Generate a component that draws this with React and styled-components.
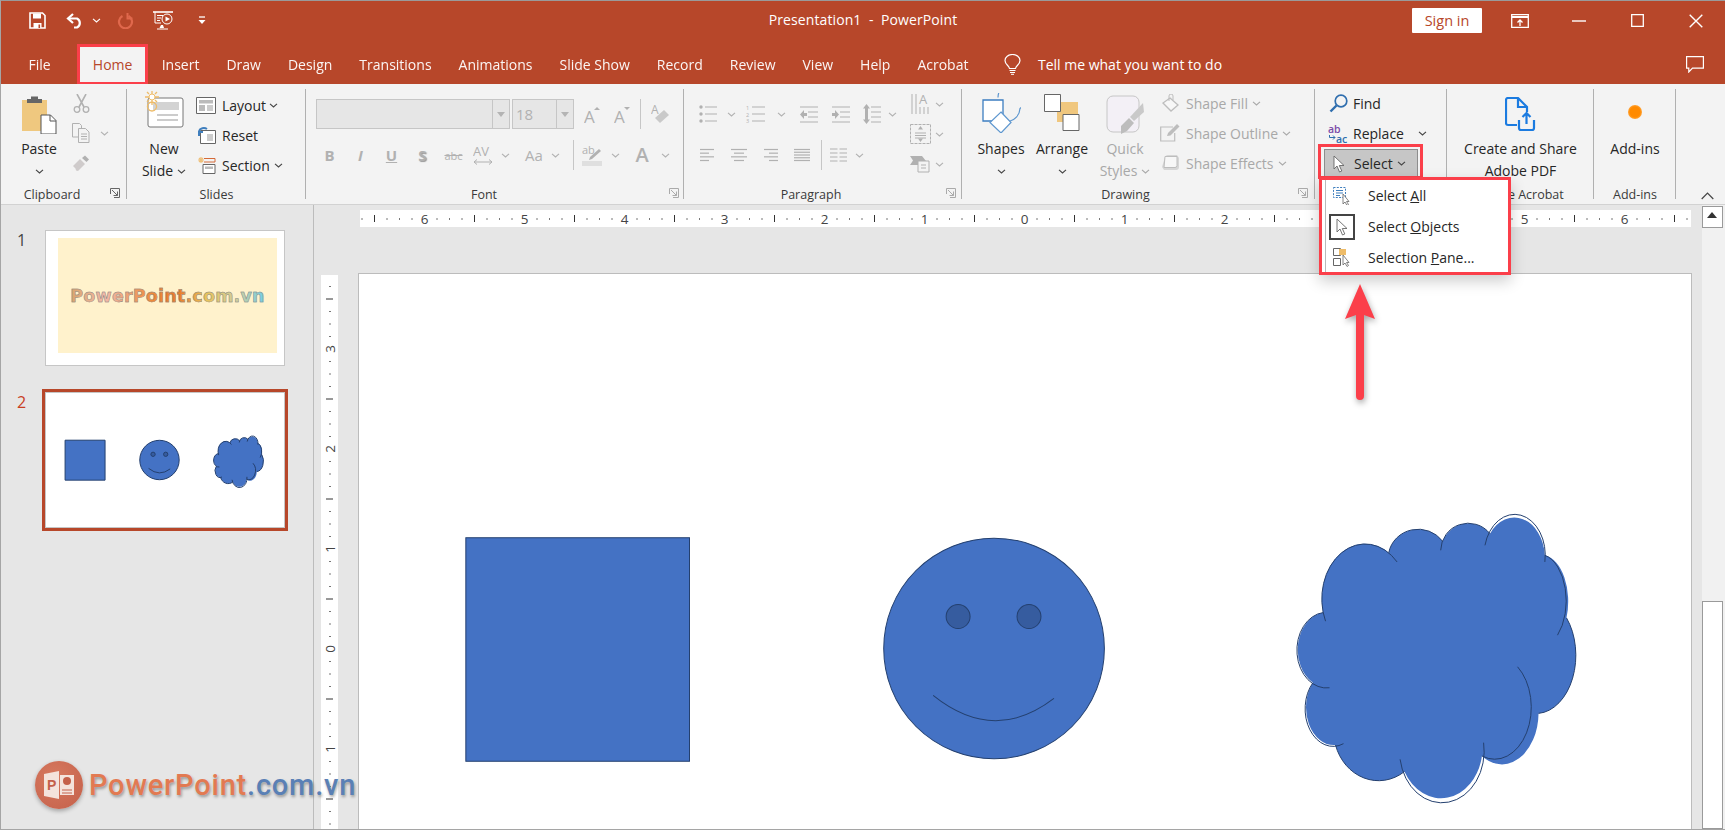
import React from 'react';
import styled, { createGlobalStyle } from 'styled-components';

const UI_FONT = '"Open Sans", "Noto Sans", "Liberation Sans", sans-serif';
const RED = '#fb3f4a';
const BRAND = '#b7472a';
const OFF = '#b1b1b1';
const DARK = '#444';

const GlobalStyle = createGlobalStyle`
  html, body { margin: 0; padding: 0; background: #e6e6e6; }
  body { font-family: ${UI_FONT}; overflow: hidden; }
  * { box-sizing: border-box; }
`;

const Svg = ({ w, h, children }) => (
  <svg width={w} height={h} viewBox={`0 0 ${w} ${h}`} fill="none" style={{ display: 'block' }}>
    {children}
  </svg>
);

const Chev = ({ c = '#444' }) => (
  <Svg w={9} h={5}>
    <path d="M1 .8 4.5 4 8 .8" stroke={c} strokeWidth="1.1" />
  </Svg>
);

const Launcher = ({ c = '#666' }) => (
  <Svg w={10} h={10}>
    <path d="M.5 6V.5H9.5V9.5H4" stroke={c} />
    <path d="M2 2 7.5 7.5M7.5 3.5v4h-4" stroke={c} />
  </Svg>
);

/* title bar icons */
const SaveIcon = () => (
  <Svg w={17} h={17}>
    <path d="M1 1h12.5L16 3.5V16H1z" stroke="#fff" strokeWidth="1.6" />
    <path d="M4 1.5h8v5H4z" fill="#fff" />
    <path d="M4.5 11h8v5h-8z" fill="#fff" />
    <path d="M9.5 12.5h1.6V16H9.5z" fill={BRAND} />
  </Svg>
);
const UndoIcon = () => (
  <Svg w={18} h={16}>
    <path d="M7 1 2 5.5 7 10" stroke="#fff" strokeWidth="2.2" />
    <path d="M3 5.5h8a5 5 0 0 1 0 9H8" stroke="#fff" strokeWidth="2.2" />
  </Svg>
);
const RedoIcon = () => (
  <Svg w={17} h={17}>
    <path d="M5.5 4a6.5 6.5 0 1 0 6 0" stroke="#e0684c" strokeWidth="2.2" />
    <path d="M10.5 1v5.5h5" stroke="#e0684c" strokeWidth="2" />
  </Svg>
);
const PresentIcon = () => (
  <Svg w={21} h={19}>
    <path d="M0 1h20" stroke="#fff" strokeWidth="1.6" />
    <path d="M2 1v11h6" stroke="#fff" />
    <path d="M4 4.5h6M4 7h4M4 9.5h3" stroke="#fff" />
    <circle cx="14" cy="8" r="5" stroke="#fff" />
    <path d="M12.5 5.5 17 8l-4.500 2.500z" fill="#fff" />
    <path d="M8 14h2l1 3H6.500z" fill="#fff" />
    <path d="M4 18h11" stroke="#fff" />
  </Svg>
);
const CustomizeIcon = () => (
  <Svg w={10} h={9}>
    <path d="M2 1h6" stroke="#fff" strokeWidth="1.3" />
    <path d="M1.500 4h7L5 8z" fill="#fff" />
  </Svg>
);
const RibbonModeIcon = () => (
  <Svg w={18} h={14}>
    <path d="M.7.7h16.600v12.600H.7z" stroke="#fff" strokeWidth="1.3" />
    <path d="M1 3h16" stroke="#fff" strokeWidth="2" />
    <path d="M9 12V6M6.500 8.500 9 6l2.500 2.500" stroke="#fff" strokeWidth="1.3" />
  </Svg>
);
const MinIcon = () => (
  <Svg w={14} h={2}>
    <path d="M0 1h14" stroke="#fff" strokeWidth="1.4" />
  </Svg>
);
const MaxIcon = () => (
  <Svg w={13} h={13}>
    <path d="M.7.7h11.600v11.600H.7z" stroke="#fff" strokeWidth="1.3" />
  </Svg>
);
const CloseIcon = () => (
  <Svg w={14} h={14}>
    <path d="m.7.700 12.600 12.600M13.300.7.7 13.300" stroke="#fff" strokeWidth="1.4" />
  </Svg>
);
const BulbIcon = () => (
  <Svg w={17} h={21}>
    <path d="M5.500 14.500C5 11.500 1 10.500 1 6.500a7.500 6 0 0 1 15 0c0 4-4 5-4.500 8z" stroke="#fff" strokeWidth="1.2" />
    <path d="M5.500 16.500h6M6 18.500h5M7 20.300h3" stroke="#fff" />
  </Svg>
);
const CommentIcon = () => (
  <Svg w={18} h={17}>
    <path d="M.6.6h16.800v11.500H6.500L2.800 16v-3.900H.6z" stroke="#fff" strokeWidth="1.2" />
  </Svg>
);

/* clipboard + slides */
const PasteIcon = () => (
  <Svg w={36} h={40}>
    <path d="M1 6h25v31H1z" fill="#efc87f" />
    <path d="M6 5h15v4H6zM10 2.500h7V6h-7z" fill="#666" />
    <path d="M20 21h9.500l5.500 5.500V40H20z" fill="#fff" stroke="#555" />
    <path d="M29 21v6h6" stroke="#555" />
  </Svg>
);
const ScissorsIcon = () => (
  <Svg w={17} h={19}>
    <path d="M4 0l7 13M13 0 6 13" stroke={OFF} strokeWidth="1.6" />
    <circle cx="4" cy="15.500" r="2.800" stroke={OFF} strokeWidth="1.3" />
    <circle cx="13" cy="15.500" r="2.800" stroke={OFF} strokeWidth="1.3" />
  </Svg>
);
const CopyIcon = () => (
  <Svg w={18} h={20}>
    <path d="M.5.500h7l2 2V14H.5z" stroke={OFF} fill="#f3f3f3" />
    <path d="M6.500 5.500h7l3.500 3.500v10.500H6.500z" stroke={OFF} fill="#f3f3f3" />
    <path d="M9 11h6M9 13.500h6M9 16h6" stroke={OFF} />
  </Svg>
);
const BrushIcon = () => (
  <Svg w={18} h={17}>
    <path d="M1 11 8 4l5 5-7 7-2-.500-.500-2z" fill="#cfcbcb" />
    <path d="m10 3 3-2.500 4 4L14.500 7z" fill={OFF} />
  </Svg>
);
const NewSlideIcon = () => (
  <Svg w={40} h={37}>
    <rect x="4" y="7" width="35" height="29" rx="2" fill="#fff" stroke="#777" />
    <path d="M9 11h26v8H9z" fill="#d3d3d3" />
    <path d="M13 24h21M13 29h21" stroke="#999" />
    <path d="M8 12a4.500 4.500 0 1 0 .01 0zM8 0v4M8 10v5M1 7h4M11 7h4M3 2l2 2M11 10l2 2M13 2l-2 2M5 10l-2 2" stroke="#eebc69" strokeWidth="1.300" transform="translate(0 -1)" />
    <circle cx="8" cy="6" r="3" fill="#fff" stroke="#eebc69" />
  </Svg>
);
const LayoutIcon = () => (
  <Svg w={20} h={17}>
    <path d="M.5.500h19v16H.5z" fill="#fff" stroke="#666" />
    <path d="M3 3h14v3.500H3zM3 8h6v6H3z" fill="#bbb" />
    <path d="M11 9h6M11 11h6M11 13h6" stroke="#999" />
  </Svg>
);
const ResetIcon = () => (
  <Svg w={20} h={18}>
    <path d="M4.500 4.500h15v13h-15z" fill="#fff" stroke="#666" />
    <path d="M11 8h6v7h-6z" fill="#ccc" />
    <path d="M5 12V8h4M5 7a5 4 0 0 1 8-2" stroke="#3f7ebd" strokeWidth="2" transform="translate(-2 -2)" />
  </Svg>
);
const SectionIcon = () => (
  <Svg w={20} h={18}>
    <path d="M5 1v6M2 4h6M3 2l4 4M7 2 3 6" stroke="#efc07a" strokeWidth="1.200" />
    <path d="M8 2.500h11V6H8" stroke="#d56a38" />
    <path d="M7 8.500h12v9H7z" fill="#fff" stroke="#666" />
    <path d="M9 10.500h8V13H9z" fill="#bbb" />
  </Svg>
);

/* font + paragraph */
const Glyph = styled.span`
  font-size: ${(p) => p.$size || 15}px;
  font-weight: ${(p) => p.$weight || 400};
  font-style: ${(p) => p.$italic ? 'italic' : 'normal'};
  text-decoration: ${(p) => p.$deco || 'none'};
  color: ${OFF};
  line-height: 1;
  font-family: ${UI_FONT};
`;
const GrowIcon = ({ down }) => (
  <Svg w={17} h={19}>
    <text x="0" y="18" fontSize="17" fontFamily="Open Sans" fill={OFF}>A</text>
    <path d={down ? 'M10 2h6l-3 3z' : 'M10 5h6l-3-3z'} fill={OFF} />
  </Svg>
);
const EraserIcon = () => (
  <Svg w={19} h={22}>
    <text x="0" y="11" fontSize="12" fontFamily="Open Sans" fill={OFF}>A</text>
    <path d="m4 15 9-8 5 5-9 8z" fill="#c9c9c9" />
  </Svg>
);
const SpacingIcon = () => (
  <Svg w={24} h={20}>
    <text x="0" y="11" fontSize="13" fontFamily="Open Sans" fill={OFF}>AV</text>
    <path d="M1 17h18M4 14.500 1 17l3 2.500M16 14.500 19 17l-3 2.500" stroke={OFF} />
  </Svg>
);
const HighlightIcon = () => (
  <Svg w={20} h={22}>
    <text x="0" y="10" fontSize="11" fontFamily="Open Sans" fill={OFF}>ab</text>
    <path d="m8 13 9-8 2 2-9 8-3 1z" fill={OFF} />
    <path d="M0 17h20v5H0z" fill="#dfdfdf" />
  </Svg>
);
const Lines = ({ w = 16, rows }) => (
  <Svg w={w} h={14}>
    {rows.map((r, i) => (
      <path key={i} d={`M${r[0]} ${1.5 + i * (11 / (rows.length - 1))}H${r[1]}`} stroke={OFF} strokeWidth="1.200" />
    ))}
  </Svg>
);
const BulletIcon = () => (
  <Svg w={18} h={18}>
    <circle cx="2" cy="2" r="1.700" fill={OFF} />
    <circle cx="2" cy="9" r="1.700" fill={OFF} />
    <circle cx="2" cy="16" r="1.700" fill={OFF} />
    <path d="M6 2h12M6 9h12M6 16h12" stroke={OFF} />
  </Svg>
);
const NumberIcon = () => (
  <Svg w={19} h={18}>
    <text x="0" y="5" fontSize="5.500" fill={OFF} fontFamily="Open Sans">1</text>
    <text x="0" y="11.500" fontSize="5.500" fill={OFF} fontFamily="Open Sans">2</text>
    <text x="0" y="18" fontSize="5.500" fill={OFF} fontFamily="Open Sans">3</text>
    <path d="M6 2h13M6 9h13M6 16h13" stroke={OFF} />
  </Svg>
);
const IndentIcon = ({ flip }) => (
  <Svg w={18} h={17}>
    <path d="M0 1h18M8 6h10M8 11h10M0 16h18" stroke={OFF} />
    <path d={flip ? 'M0 7h3V4l4 4.500-4 4.500v-3H0z' : 'M7 7H4V4L0 8.500 4 13v-3h3z'} fill={OFF} />
  </Svg>
);
const LineSpaceIcon = () => (
  <Svg w={18} h={20}>
    <path d="M8 3h10M8 8h10M8 13h10M8 18h10" stroke={OFF} />
    <path d="M3.500 0 7 4.500H5v11h2L3.500 20 0 15.500h2v-11H0z" fill={OFF} />
  </Svg>
);
const ColumnsIcon = () => (
  <Svg w={17} h={15}>
    <path d="M0 1h7.500M9.500 1H17M0 5h7.500M9.500 5H17M0 9h7.500M9.500 9H17M0 13h7.500M9.500 13H17" stroke={OFF} />
  </Svg>
);
const TextDirIcon = () => (
  <Svg w={19} h={22}>
    <text x="8" y="11" fontSize="13" fill={OFF} fontFamily="Open Sans">A</text>
    <path d="M1 1v20M5 1v20M9 14v7M13 14v7M17 14v7" stroke={OFF} />
  </Svg>
);
const AlignTextIcon = () => (
  <Svg w={21} h={20}>
    <path d="M.5.500h20v19H.5z" stroke={OFF} strokeDasharray="3 1" />
    <path d="M5 9h11M5 11.500h11M5 14h11" stroke={OFF} />
    <path d="M10.500 2 8 5.500h5zM10.500 18 8 14.500h5z" fill={OFF} />
  </Svg>
);
const SmartArtIcon = () => (
  <Svg w={20} h={18}>
    <path d="M0 1h12l4 5-4 4H0l3-4.500z" fill={OFF} />
    <path d="M8 6h11v11H8z" fill="#f3f3f3" stroke={OFF} />
    <path d="M11 10h5M11 13h5" stroke={OFF} />
  </Svg>
);

/* drawing */
const ShapesIcon = () => (
  <Svg w={39} h={40}>
    <path d="M16 4.500a13.500 14 0 1 1 22 11 13.500 14 0 0 1-11 13" stroke="#5e97cf" strokeWidth="1.200" />
    <path d="M1 7h20v21H1z" fill="#fff" stroke="#3d7ec1" strokeWidth="1.300" />
    <path d="m19 19 10 10.500-10 10.500L8 29.500z" fill="#fff" stroke="#5e97cf" strokeWidth="1.200" />
  </Svg>
);
const ArrangeIcon = () => (
  <Svg w={36} h={37}>
    <path d="M16 7h21v20H16z" fill="#f0c77e" transform="translate(-3 1)" />
    <path d="M.5.500h16v17H.5z" fill="#fff" stroke="#666" />
    <path d="M19 20.500h16v16H19z" fill="#fff" stroke="#666" />
  </Svg>
);
const QuickStyleIcon = () => (
  <Svg w={38} h={40}>
    <rect x="1" y="1" width="32" height="36" rx="6" fill="#f3f0f6" stroke="#c6c6c6" />
    <path d="m15 31 8-8 5 5-7 8-6 3z" fill="#bdbdbd" />
    <path d="m24 22 13-14 1 9-10 9z" fill="#c9c9c9" />
  </Svg>
);
const FillIcon = () => (
  <Svg w={18} h={18}>
    <path d="m9 4 8 7-7 6-8-8z" stroke="#bdbdbd" strokeWidth="1.300" fill="#f7f7f7" />
    <path d="M8 7V2a2 2 0 0 1 4 0v4" stroke="#bdbdbd" />
  </Svg>
);
const OutlineIcon = () => (
  <Svg w={20} h={18}>
    <path d="M13 3H.7v14h14V9" stroke="#bdbdbd" strokeWidth="1.200" />
    <path d="m7 12 1-3 9-9 2.500 2.500-9 9z" fill="#bdbdbd" />
  </Svg>
);
const EffectsIcon = () => (
  <Svg w={19} h={18}>
    <path d="M4 3a3 3 0 0 1 3-2h9l2 3v9a3 3 0 0 1-3 3H3L1 13z" fill="#d6d6d6" />
    <path d="M4 2.500h12v9a2 2 0 0 1-2 2H3z" fill="#f7f7f7" stroke="#bdbdbd" />
  </Svg>
);

/* editing */
const FindIcon = () => (
  <Svg w={19} h={19}>
    <circle cx="12" cy="7" r="5.800" stroke="#2f6eae" strokeWidth="1.700" />
    <path d="m7.500 11.500-6 6" stroke="#2f6eae" strokeWidth="2.400" />
  </Svg>
);
const ReplaceIcon = () => (
  <Svg w={20} h={19}>
    <text x="0" y="9" fontSize="10.500" fontFamily="Open Sans" fill="#7a4ba8" fontWeight="600">ab</text>
    <text x="8" y="18.500" fontSize="10.500" fontFamily="Open Sans" fill="#2f6eae" fontWeight="600">ac</text>
    <path d="M1.500 11v2.500H7M5 11.500l2 2-2 2" stroke="#2f6eae" />
  </Svg>
);
const Cursor = ({ s = 1 }) => (
  <svg width={12 * s} height={18 * s} viewBox="0 0 12 18" fill="none" style={{ display: 'block' }}>
    <path d="M1 1v13l3-3 2.500 6 2.300-1-2.500-5.500H11z" fill="#fff" stroke="#666" strokeWidth=".9" />
  </svg>
);
const SelectAllIcon = () => (
  <Svg w={18} h={18}>
    <path d="M.5.500h12v10H.5z" stroke="#3f7ebd" strokeDasharray="2 1.300" />
    <path d="M3 3.500h7M3 6h7M3 8.500h4" stroke="#3f7ebd" />
    <path d="M10 7v10l2-2 2 3.500 1.500-1-2-3H16z" fill="#fff" stroke="#666" strokeWidth=".8" />
  </Svg>
);
const PaneIcon = () => (
  <Svg w={18} h={19}>
    <path d="M.5.500h7v7h-7zM.5 10.500h7v7h-7z" stroke="#666" fill="#fff" />
    <path d="M6 1h7v6H6z" fill="#eebc69" />
    <path d="M10 7v10l2-2 2 3.500 1.500-1-2-3H16z" fill="#fff" stroke="#666" strokeWidth=".8" />
  </Svg>
);
const PdfIcon = () => (
  <Svg w={31} h={35}>
    <path d="M12 28H3a2 2 0 0 1-2-2V3a2 2 0 0 1 2-2h10l9 9v5" stroke="#1b7be0" strokeWidth="2.200" />
    <path d="M13 1v9h9" stroke="#1b7be0" strokeWidth="2.200" />
    <path d="M14 23v8a2 2 0 0 0 2 2h11a2 2 0 0 0 2-2v-8" stroke="#1b7be0" strokeWidth="2.200" />
    <path d="M21.500 27V16M17.500 20l4-4 4 4" stroke="#1b7be0" strokeWidth="2.200" />
  </Svg>
);

const Window = styled.div`
  position: relative;
  width: 1725px;
  height: 830px;
  overflow: hidden;
  display: flex;
  flex-direction: column;
  background: #e6e6e6;
  border-top: 1px solid #9a9a9a;
  border-left: 1px solid #a5a5a5;
  border-bottom: 1px solid #a5a5a5;
  color: #262626;
`;

const TitleRow = styled.div`
  height: 43px;
  background: ${BRAND};
  display: grid;
  grid-template-columns: 1fr auto 1fr;
  align-items: center;
  color: #fff;
  font-size: 14px;
`;
const Qat = styled.div`
  display: flex;
  align-items: center;
  padding-left: 28px;
  margin-top: -4px;
`;
const WinButtons = styled.div`
  display: flex;
  align-items: center;
  justify-content: flex-end;
  padding-right: 22px;
  margin-top: -4px;
`;
const Nudge = styled.span`
  display: block;
  margin-left: ${(p) => p.$ml || 0}px;
`;
const DocTitle = styled.div`
  white-space: pre;
  margin-top: -6px;
  letter-spacing: .1px;
`;
const SignIn = styled.div`
  width: 70px;
  height: 25px;
  background: #fff;
  color: ${BRAND};
  font-size: 14.5px;
  line-height: 25px;
  text-align: center;
  border-radius: 1px;
`;

const TabRow = styled.nav`
  height: 40px;
  background: ${BRAND};
  display: flex;
  align-items: center;
  padding-left: 14px;
  position: relative;
`;
const Tab = styled.div`
  padding: 0 13.5px;
  font-size: 14px;
  color: #fff;
  white-space: nowrap;
  opacity: .95;
`;
const HomeTab = styled.div`
  width: 71px;
  height: 41px;
  margin: 0 0 -1px 13px;
  align-self: flex-end;
  background: #f3f3f3;
  border: 3px solid ${RED};
  color: ${BRAND};
  font-size: 14px;
  text-align: center;
  line-height: 35px;
`;
const TellMe = styled.div`
  margin-left: 22px;
  display: flex;
  align-items: center;
  gap: 17px;
  color: #fff;
  font-size: 14px;
`;
const CommentSlot = styled.div`
  margin-left: auto;
  margin-right: 21px;
`;

const Ribbon = styled.div`
  height: 121px;
  flex: none;
  background: #f3f3f3;
  border-bottom: 1px solid #d2d2d2;
  display: flex;
  position: relative;
  z-index: 3;
`;
const Group = styled.section`
  position: relative;
  width: ${(p) => p.$w}px;
  flex: none;
  display: flex;
  flex-direction: column;
  &::after {
    content: '';
    position: absolute;
    top: 5px;
    bottom: 5px;
    right: 0;
    width: 1px;
    background: #b0b0b0;
  }
`;
const GroupBody = styled.div`
  height: 102px;
  display: flex;
  align-items: flex-start;
  padding-left: ${(p) => p.$pl || 0}px;
`;
const GroupLabel = styled.div`
  height: 18px;
  line-height: 18px;
  font-size: 12.5px;
  text-align: center;
  padding-right: ${(p) => p.$pr || 0}px;
  color: #3a3a3a;
  white-space: nowrap;
`;
const CornerLauncher = styled.span`
  position: absolute;
  right: ${(p) => p.$r}px;
  bottom: 6px;
`;
const LargeButton = styled.div`
  width: ${(p) => p.$w}px;
  margin-left: ${(p) => p.$ml || 0}px;
  display: flex;
  flex-direction: column;
  align-items: center;
  flex: none;
  color: ${(p) => (p.$off ? '#a8a8a8' : '#262626')};
`;
const LargeIconArea = styled.div`
  height: 54px;
  padding-top: ${(p) => p.$pt ?? 8}px;
  display: flex;
  justify-content: center;
  align-items: flex-start;
`;
const LargeLine = styled.div`
  height: 22px;
  line-height: 22px;
  font-size: 14px;
  white-space: nowrap;
  display: flex;
  align-items: center;
  gap: 4px;
`;
const SmallStack = styled.div`
  display: flex;
  flex-direction: column;
  padding-top: ${(p) => p.$pt ?? 4}px;
  margin-left: ${(p) => p.$ml || 0}px;
  flex: none;
`;
const SmallRow = styled.div`
  height: 30px;
  display: flex;
  align-items: center;
  font-size: 14px;
  white-space: nowrap;
  color: ${(p) => (p.$off ? '#a8a8a8' : '#262626')};
`;
const IconCell = styled.span`
  width: ${(p) => p.$w}px;
  margin-right: ${(p) => p.$mr || 0}px;
  margin-left: ${(p) => p.$ml || 0}px;
  flex: none;
  display: flex;
  justify-content: center;
`;
const SelectRow = styled(SmallRow)`
  position: relative;
  width: 94px;
  height: 29px;
  margin: 1px 0 0 -4px;
  padding-left: 4px;
  background: #c6c6c6;
  border: 1px solid #8d8d8d;
  &::after {
    content: '';
    position: absolute;
    left: -7px;
    right: -6px;
    top: -6px;
    bottom: -2px;
    border: 3px solid ${RED};
    pointer-events: none;
  }
`;
const ToolColumn = styled.div`
  padding-top: 15px;
  display: flex;
  flex-direction: column;
  gap: 11px;
  width: ${(p) => p.$w}px;
  flex: none;
  margin-left: ${(p) => p.$ml || 0}px;
`;
const ToolRow = styled.div`
  height: 30px;
  display: flex;
  align-items: center;
`;
const Slot = styled.span`
  width: ${(p) => p.$w}px;
  margin-left: ${(p) => p.$ml || 0}px;
  flex: none;
  display: flex;
  justify-content: center;
  align-items: center;
`;
const Sep = styled.span`
  width: 1px;
  height: 30px;
  flex: none;
  background: #c6c6c6;
  margin-left: ${(p) => p.$ml || 0}px;
`;
const Combo = styled.div`
  width: ${(p) => p.$w}px;
  height: 30px;
  flex: none;
  margin-right: 2px;
  background: #e6e6e6;
  border: 1px solid #c6c6c6;
  display: flex;
  color: ${OFF};
  font-size: 15px;
  line-height: 28px;
`;
const ComboValue = styled.span`
  flex: 1;
  padding-left: 3px;
`;
const ComboArrow = styled.span`
  width: 17px;
  border-left: 1px solid #c6c6c6;
  position: relative;
  &::after {
    content: '';
    position: absolute;
    left: 4px;
    top: 12px;
    border: 4px solid transparent;
    border-top: 5px solid #b4b4b4;
  }
`;
const OrangeDot = styled.span`
  display: block;
  width: 14px;
  height: 14px;
  border-radius: 50%;
  margin-top: 13px;
  background: radial-gradient(circle, #ff8a00 50%, #ffc27a 100%);
  filter: blur(.4px);
`;
const Collapse = styled.span`
  position: absolute;
  right: 11px;
  bottom: 4px;
`;

const DropMenu = styled.div`
  position: absolute;
  left: 4px;
  top: 93px;
  width: 192px;
  height: 98px;
  z-index: 5;
  background: #fff;
  border: 3px solid ${RED};
  box-shadow: 0 6px 14px rgba(0, 0, 0, .2);
  padding-left: 3px;
  &::before {
    content: '';
    position: absolute;
    left: 3px;
    top: 0;
    bottom: 0;
    width: 1px;
    background: #b9b9b9;
  }
`;
const MenuItem = styled.div`
  height: 31px;
  display: flex;
  align-items: center;
  font-size: 14px;
  color: #262626;
`;
const MenuIcon = styled.span`
  width: 26px;
  height: 26px;
  margin-left: 4px;
  flex: none;
  display: flex;
  align-items: center;
  justify-content: center;
  border: ${(p) => (p.$on ? '2px solid #444' : 'none')};
`;
const MenuText = styled.span`
  margin-left: 13px;
`;
const U = styled.span`
  text-decoration: underline;
`;

const Workspace = styled.div`
  flex: 1;
  display: flex;
  min-height: 0;
`;
const Sidebar = styled.aside`
  width: 313px;
  flex: none;
  border-right: 1px solid #bcbcbc;
  padding: 25px 0 0 16px;
  display: flex;
  flex-direction: column;
  gap: 26px;
`;
const ThumbRow = styled.div`
  display: flex;
`;
const ThumbNumber = styled.div`
  width: 28px;
  font-size: 16px;
  line-height: 16px;
  padding-top: 2px;
  color: ${(p) => (p.$on ? '#c9401f' : '#444')};
`;
const Thumb = styled.div`
  width: 240px;
  height: 136px;
  background: #fff;
  border: 1px solid #c6c6c6;
  box-shadow: ${(p) => (p.$on ? `0 0 0 3px ${BRAND}` : 'none')};
  padding: ${(p) => (p.$on ? 0 : '7px 7px 12px 12px')};
`;
const Poster = styled.div`
  height: 100%;
  background: #fff2cc;
  display: flex;
  align-items: center;
  justify-content: center;
`;
const PosterText = styled.div`
  font-family: "DejaVu Sans", sans-serif;
  font-weight: 700;
  font-size: 17.500px;
  letter-spacing: .2px;
  color: transparent;
  background: linear-gradient(90deg, #d9a46b, #f3b9a8 18%, #ee8a3a 42%, #ea7a2a 55%, #e9c35a 70%, #cfd0a0 86%, #6fd0e8);
  -webkit-background-clip: text;
  background-clip: text;
  -webkit-text-stroke: .5px #8a8a8a;
`;
const Stage = styled.main`
  flex: 1;
  min-width: 0;
  display: flex;
  flex-direction: column;
  padding-top: 5px;
`;
const HRulerBar = styled.div`
  height: 17px;
  margin-left: 46px;
  width: 1331px;
  flex: none;
  background: #fff;
`;
const SlideRow = styled.div`
  flex: 1;
  min-height: 0;
  display: flex;
  align-items: stretch;
  margin-top: 46px;
  padding-left: 7px;
`;
const VRulerBar = styled.div`
  width: 17px;
  flex: none;
  margin-top: 2px;
  background: #fff;
  overflow: hidden;
`;
const Slide = styled.div`
  width: 1334px;
  margin-left: 20px;
  flex: none;
  background: #fff;
  border-top: 1px solid #bcbcbc;
  border-left: 1px solid #bcbcbc;
  border-right: 1px solid #bcbcbc;
  overflow: hidden;
`;
const ScrollTrack = styled.div`
  width: 23px;
  flex: none;
  background: #f1f1f1;
  display: flex;
  flex-direction: column;
  padding-top: 1px;
`;
const ScrollUp = styled.div`
  width: 21px;
  height: 22px;
  background: #fff;
  border: 1px solid #9a9a9a;
  position: relative;
  &::after {
    content: '';
    position: absolute;
    left: 4px;
    top: 5px;
    border: 5px solid transparent;
    border-top: 0;
    border-bottom: 6px solid #333;
  }
`;
const ScrollThumb = styled.div`
  width: 21px;
  margin-top: auto;
  height: 228px;
  background: #fff;
  border: 1px solid #9a9a9a;
`;

const Watermark = styled.div`
  position: absolute;
  left: 34px;
  bottom: 20px;
  display: flex;
  align-items: center;
  gap: 6px;
  z-index: 2;
`;
const LogoCircle = styled.div`
  width: 48px;
  height: 48px;
  border-radius: 50%;
  background: radial-gradient(circle at 40% 35%, #d7795f, #c4604a);
  box-shadow: 0 2px 4px rgba(0, 0, 0, .3);
  display: flex;
  align-items: center;
  justify-content: center;
`;
const WatermarkText = styled.div`
  font-family: "Roboto", "Liberation Sans", sans-serif;
  font-weight: 500;
  font-size: 29px;
  letter-spacing: .8px;
  color: #e27a52;
  text-shadow: 1px 2px 3px rgba(0, 0, 0, .35), 0 0 1px #fff;
  white-space: nowrap;
`;
const Dot = styled.span`
  color: #5a80b5;
`;
const PointerArrow = styled.div`
  position: absolute;
  left: 1340px;
  top: 281px;
  z-index: 4;
  filter: drop-shadow(1px 3px 3px rgba(0, 0, 0, .35));
`;

const SlideArt = ({ width, height }) => {
  const line = { stroke: '#24406f', strokeWidth: 1, vectorEffect: 'non-scaling-stroke' };
  const cloudFill =
    'M131 342A130 165 0 0 1 328 162A90 86 0 0 1 490 128A83 83 0 0 1 632 105A92 123 0 0 1 797 170A81 140 0 0 1 862 358A120 175 0 0 1 778 645A110 156 0 0 1 608 773A125 153 0 0 1 375 820A135 150 0 0 1 168 740A84 113 0 0 1 100 553A88 113 0 0 1 131 342Z';
  const cloudLines =
    'M138 368A130 165 0 0 1 353 190M328 162A90 86 0 0 1 490 128M484 155A83 83 0 0 1 632 105M617 140A92 123 0 0 1 797 190M797 170A81 140 0 0 1 835 410M862 358A120 175 0 0 1 778 645M715 505A110 156 0 0 1 608 773M613 733A125 153 0 0 1 362 783M375 820A135 150 0 0 1 168 740M192 736A84 113 0 0 1 100 553M150 568A88 113 0 0 1 131 342';
  return (
    <svg width={width} height={height} viewBox="0 0 1334 750" style={{ display: 'block' }}>
      <rect x="107" y="264" width="224" height="224" fill="#4472c4" {...line} />
      <circle cx="636" cy="375" r="110.500" fill="#4472c4" {...line} />
      <circle cx="600" cy="343" r="12" fill="#365c9f" {...line} />
      <circle cx="671" cy="343" r="12" fill="#365c9f" {...line} />
      <path d="M575 422Q636 471 696 425" fill="none" {...line} />
      <g transform="translate(922 225) scale(.3333)">
        <path d={cloudFill} fill="#4472c4" />
        <path d={cloudLines} fill="none" {...line} />
      </g>
    </svg>
  );
};

function HorizontalRuler() {
  const marks = [];
  for (let i = -53; i <= 53; i++) {
    const x = 664.5 + i * 12.5;
    if (i % 8 === 0) {
      marks.push(
        <text key={i} x={x} y="13.500" textAnchor="middle" fontSize="13.500" fontFamily="Open Sans" fill="#444">
          {Math.abs(i / 8)}
        </text>
      );
    } else if (i % 4 === 0) {
      marks.push(<path key={i} d={`M${x} 5v7`} stroke="#333" />);
    } else {
      marks.push(<path key={i} d={`M${x} 8v2`} stroke="#777" />);
    }
  }
  return (
    <svg width="1331" height="17" style={{ display: 'block' }}>
      {marks}
    </svg>
  );
}

function VerticalRuler() {
  const marks = [];
  for (let i = -29; i <= 14; i++) {
    const y = 374 + i * 12.5;
    if (i % 8 === 0) {
      marks.push(
        <text key={i} x="0" y="0" textAnchor="middle" fontSize="13.500" fontFamily="Open Sans" fill="#444" transform={`translate(13.500 ${y}) rotate(-90)`}>
          {Math.abs(i / 8)}
        </text>
      );
    } else if (i % 4 === 0) {
      marks.push(<path key={i} d={`M5 ${y}h7`} stroke="#333" />);
    } else {
      marks.push(<path key={i} d={`M8 ${y}h2`} stroke="#777" />);
    }
  }
  return (
    <svg width="17" height="560" style={{ display: 'block' }}>
      {marks}
    </svg>
  );
}

const tabs = ['Insert', 'Draw', 'Design', 'Transitions', 'Animations', 'Slide Show', 'Record', 'Review', 'View', 'Help', 'Acrobat'];

export default function App() {
  return (
    <Window>
      <GlobalStyle />
      <TitleRow>
        <Qat>
          <SaveIcon />
          <Nudge $ml={20}><UndoIcon /></Nudge>
          <Nudge $ml={8}><Chev c="#fff" /></Nudge>
          <Nudge $ml={16}><RedoIcon /></Nudge>
          <Nudge $ml={19}><PresentIcon /></Nudge>
          <Nudge $ml={23}><CustomizeIcon /></Nudge>
        </Qat>
        <DocTitle>Presentation1  -  PowerPoint</DocTitle>
        <WinButtons>
          <SignIn>Sign in</SignIn>
          <Nudge $ml={29}><RibbonModeIcon /></Nudge>
          <Nudge $ml={43}><MinIcon /></Nudge>
          <Nudge $ml={45}><MaxIcon /></Nudge>
          <Nudge $ml={45}><CloseIcon /></Nudge>
        </WinButtons>
      </TitleRow>

      <TabRow>
        <Tab>File</Tab>
        <HomeTab>Home</HomeTab>
        {tabs.map((t) => (
          <Tab key={t}>{t}</Tab>
        ))}
        <TellMe>
          <BulbIcon />
          <span>Tell me what you want to do</span>
        </TellMe>
        <CommentSlot>
          <CommentIcon />
        </CommentSlot>
      </TabRow>

      <Ribbon>
        <Group $w={126}>
          <GroupBody $pl={5}>
            <LargeButton $w={66}>
              <LargeIconArea $pt={10}><PasteIcon /></LargeIconArea>
              <LargeLine>Paste</LargeLine>
              <LargeLine><Chev /></LargeLine>
            </LargeButton>
            <SmallStack>
              <SmallRow $off><IconCell $w={18}><ScissorsIcon /></IconCell></SmallRow>
              <SmallRow $off><IconCell $w={18}><CopyIcon /></IconCell><IconCell $w={9} $ml={10}><Chev c="#b1b1b1" /></IconCell></SmallRow>
              <SmallRow $off><IconCell $w={18}><BrushIcon /></IconCell></SmallRow>
            </SmallStack>
          </GroupBody>
          <GroupLabel $pr={24}>Clipboard</GroupLabel>
          <CornerLauncher $r={7}><Launcher /></CornerLauncher>
        </Group>

        <Group $w={179}>
          <GroupBody $pl={12}>
            <LargeButton $w={50}>
              <LargeIconArea $pt={7}><NewSlideIcon /></LargeIconArea>
              <LargeLine>New</LargeLine>
              <LargeLine>Slide <Chev /></LargeLine>
            </LargeButton>
            <SmallStack $ml={7} $pt={6}>
              <SmallRow><IconCell $w={20} $mr={6}><LayoutIcon /></IconCell>Layout<IconCell $w={9} $ml={3}><Chev /></IconCell></SmallRow>
              <SmallRow><IconCell $w={20} $mr={6}><ResetIcon /></IconCell>Reset</SmallRow>
              <SmallRow><IconCell $w={20} $mr={6}><SectionIcon /></IconCell>Section<IconCell $w={9} $ml={4}><Chev /></IconCell></SmallRow>
            </SmallStack>
          </GroupBody>
          <GroupLabel>Slides</GroupLabel>
        </Group>

        <Group $w={378}>
          <GroupBody $pl={8}>
            <ToolColumn $w={370} $ml={0}>
              <ToolRow>
                <Nudge $ml={2} />
                <Combo $w={194}><ComboValue /><ComboArrow /></Combo>
                <Combo $w={62}><ComboValue>18</ComboValue><ComboArrow /></Combo>
                <Slot $w={30} $ml={1}><GrowIcon /></Slot>
                <Slot $w={30}><GrowIcon down /></Slot>
                <Sep $ml={3} />
                <Slot $w={30} $ml={4}><EraserIcon /></Slot>
              </ToolRow>
              <ToolRow>
                <Slot $w={31}><Glyph $weight={700}>B</Glyph></Slot>
                <Slot $w={31}><Glyph $weight={700} $italic>I</Glyph></Slot>
                <Slot $w={31}><Glyph $weight={700} $deco="underline">U</Glyph></Slot>
                <Slot $w={31}><Glyph $weight={700} style={{ textShadow: '1px 1px 1px #999' }}>S</Glyph></Slot>
                <Slot $w={31}><Glyph $size={11} $deco="line-through">abc</Glyph></Slot>
                <Slot $w={31}><SpacingIcon /></Slot>
                <Slot $w={10}><Chev c="#b1b1b1" /></Slot>
                <Slot $w={32} $ml={8}><Glyph $size={15}>Aa</Glyph></Slot>
                <Slot $w={10}><Chev c="#b1b1b1" /></Slot>
                <Sep $ml={13} />
                <Slot $w={32} $ml={2}><HighlightIcon /></Slot>
                <Slot $w={10} $ml={2}><Chev c="#b1b1b1" /></Slot>
                <Slot $w={32} $ml={6}><Glyph $size={20} $weight={600}>A</Glyph></Slot>
                <Slot $w={10} $ml={2}><Chev c="#b1b1b1" /></Slot>
              </ToolRow>
            </ToolColumn>
          </GroupBody>
          <GroupLabel $pr={22}>Font</GroupLabel>
          <CornerLauncher $r={5}><Launcher c="#aaa" /></CornerLauncher>
        </Group>

        <Group $w={278}>
          <GroupBody $pl={8}>
            <ToolColumn $w={213}>
              <ToolRow>
                <Slot $w={32}><BulletIcon /></Slot>
                <Slot $w={10} $ml={2}><Chev c="#b1b1b1" /></Slot>
                <Slot $w={32} $ml={3}><NumberIcon /></Slot>
                <Slot $w={10} $ml={5}><Chev c="#b1b1b1" /></Slot>
                <Slot $w={32} $ml={7}><IndentIcon /></Slot>
                <Slot $w={32}><IndentIcon flip /></Slot>
                <Slot $w={30}><LineSpaceIcon /></Slot>
                <Slot $w={10}><Chev c="#b1b1b1" /></Slot>
              </ToolRow>
              <ToolRow>
                <Slot $w={32}><Lines rows={[[0, 14], [0, 9], [0, 14], [0, 9]]} /></Slot>
                <Slot $w={30}><Lines rows={[[0, 16], [3, 13], [0, 16], [3, 13]]} /></Slot>
                <Slot $w={32}><Lines rows={[[2, 16], [7, 16], [2, 16], [7, 16]]} /></Slot>
                <Slot $w={32}><Lines rows={[[0, 16], [0, 16], [0, 16], [0, 16], [0, 16]]} /></Slot>
                <Sep $ml={3} />
                <Slot $w={32}><ColumnsIcon /></Slot>
                <Slot $w={10}><Chev c="#b1b1b1" /></Slot>
              </ToolRow>
            </ToolColumn>
            <SmallStack $pt={5}>
              <SmallRow><IconCell $w={30}><TextDirIcon /></IconCell><IconCell $w={9}><Chev c="#b1b1b1" /></IconCell></SmallRow>
              <SmallRow><IconCell $w={30}><AlignTextIcon /></IconCell><IconCell $w={9}><Chev c="#b1b1b1" /></IconCell></SmallRow>
              <SmallRow><IconCell $w={30}><SmartArtIcon /></IconCell><IconCell $w={9}><Chev c="#b1b1b1" /></IconCell></SmallRow>
            </SmallStack>
          </GroupBody>
          <GroupLabel $pr={24}>Paragraph</GroupLabel>
          <CornerLauncher $r={6}><Launcher c="#aaa" /></CornerLauncher>
        </Group>

        <Group $w={353}>
          <GroupBody $pl={8}>
            <LargeButton $w={62}>
              <LargeIconArea $pt={9}><ShapesIcon /></LargeIconArea>
              <LargeLine>Shapes</LargeLine>
              <LargeLine><Chev /></LargeLine>
            </LargeButton>
            <LargeButton $w={60}>
              <LargeIconArea $pt={10}><ArrangeIcon /></LargeIconArea>
              <LargeLine>Arrange</LargeLine>
              <LargeLine><Chev /></LargeLine>
            </LargeButton>
            <LargeButton $w={54} $ml={6} $off>
              <LargeIconArea $pt={11}><QuickStyleIcon /></LargeIconArea>
              <LargeLine>Quick</LargeLine>
              <LargeLine>Styles <Chev c="#a8a8a8" /></LargeLine>
            </LargeButton>
            <SmallStack $ml={8}>
              <SmallRow $off><IconCell $w={20} $mr={6}><FillIcon /></IconCell>Shape Fill<IconCell $w={9} $ml={4}><Chev c="#a8a8a8" /></IconCell></SmallRow>
              <SmallRow $off><IconCell $w={20} $mr={6}><OutlineIcon /></IconCell>Shape Outline<IconCell $w={9} $ml={4}><Chev c="#a8a8a8" /></IconCell></SmallRow>
              <SmallRow $off><IconCell $w={20} $mr={6}><EffectsIcon /></IconCell>Shape Effects<IconCell $w={9} $ml={4}><Chev c="#a8a8a8" /></IconCell></SmallRow>
            </SmallStack>
          </GroupBody>
          <GroupLabel $pr={26}>Drawing</GroupLabel>
          <CornerLauncher $r={7}><Launcher c="#aaa" /></CornerLauncher>
        </Group>

        <Group $w={132}>
          <GroupBody $pl={13}>
            <SmallStack>
              <SmallRow><IconCell $w={20} $mr={5}><FindIcon /></IconCell>Find</SmallRow>
              <SmallRow><IconCell $w={20} $mr={5}><ReplaceIcon /></IconCell>Replace<IconCell $w={9} $ml={14}><Chev /></IconCell></SmallRow>
              <SelectRow><IconCell $w={20} $mr={5}><Cursor /></IconCell>Select<IconCell $w={9} $ml={4}><Chev /></IconCell></SelectRow>
            </SmallStack>
          </GroupBody>
          <GroupLabel>Editing</GroupLabel>
          <DropMenu>
            <MenuItem>
              <MenuIcon><SelectAllIcon /></MenuIcon>
              <MenuText>Select <U>A</U>ll</MenuText>
            </MenuItem>
            <MenuItem>
              <MenuIcon $on><Cursor /></MenuIcon>
              <MenuText>Select <U>O</U>bjects</MenuText>
            </MenuItem>
            <MenuItem>
              <MenuIcon><PaneIcon /></MenuIcon>
              <MenuText>Selection <U>P</U>ane...</MenuText>
            </MenuItem>
          </DropMenu>
        </Group>

        <Group $w={147}>
          <GroupBody>
            <LargeButton $w={147}>
              <LargeIconArea $pt={13}><PdfIcon /></LargeIconArea>
              <LargeLine>Create and Share</LargeLine>
              <LargeLine>Adobe PDF</LargeLine>
            </LargeButton>
          </GroupBody>
          <GroupLabel>Adobe Acrobat</GroupLabel>
        </Group>

        <Group $w={82}>
          <GroupBody>
            <LargeButton $w={82}>
              <LargeIconArea $pt={8}><OrangeDot /></LargeIconArea>
              <LargeLine>Add-ins</LargeLine>
            </LargeButton>
          </GroupBody>
          <GroupLabel>Add-ins</GroupLabel>
        </Group>

        <Collapse>
          <Svg w={13} h={8}>
            <path d="M.7 7 6.500 1 12.300 7" stroke={DARK} strokeWidth="1.200" />
          </Svg>
        </Collapse>
      </Ribbon>

      <Workspace>
        <Sidebar>
          <ThumbRow>
            <ThumbNumber>1</ThumbNumber>
            <Thumb>
              <Poster>
                <PosterText>PowerPoint.com.vn</PosterText>
              </Poster>
            </Thumb>
          </ThumbRow>
          <ThumbRow>
            <ThumbNumber $on>2</ThumbNumber>
            <Thumb $on>
              <SlideArt width={238} height={134} />
            </Thumb>
          </ThumbRow>
        </Sidebar>
        <Stage>
          <HRulerBar>
            <HorizontalRuler />
          </HRulerBar>
          <SlideRow>
            <VRulerBar>
              <VerticalRuler />
            </VRulerBar>
            <Slide>
              <SlideArt width={1332} height={749} />
            </Slide>
          </SlideRow>
        </Stage>
        <ScrollTrack>
          <ScrollUp />
          <ScrollThumb />
        </ScrollTrack>
      </Workspace>

      <Watermark>
        <LogoCircle>
          <svg width="32" height="30" viewBox="0 0 32 30">
            <path d="M1 4 16 1v28L1 26z" fill="#f4e3dc" />
            <path d="M17 5h14v20H17z" fill="#f4e3dc" />
            <text x="4" y="20" fontSize="14" fontFamily="Liberation Sans" fontWeight="700" fill="#c4604a">P</text>
            <path d="M19 20h10M19 23h10" stroke="#c4604a" />
            <circle cx="24" cy="11" r="4" fill="#c4604a" />
          </svg>
        </LogoCircle>
        <WatermarkText>
          PowerPoint<Dot>.com.vn</Dot>
        </WatermarkText>
      </Watermark>

      <PointerArrow>
        <svg width="38" height="122" viewBox="0 0 38 122">
          <path d="M19 2 34 37 23 33V114a4 4 0 0 1-8 0V33L4 37z" fill="#fb3f4a" />
        </svg>
      </PointerArrow>
    </Window>
  );
}
